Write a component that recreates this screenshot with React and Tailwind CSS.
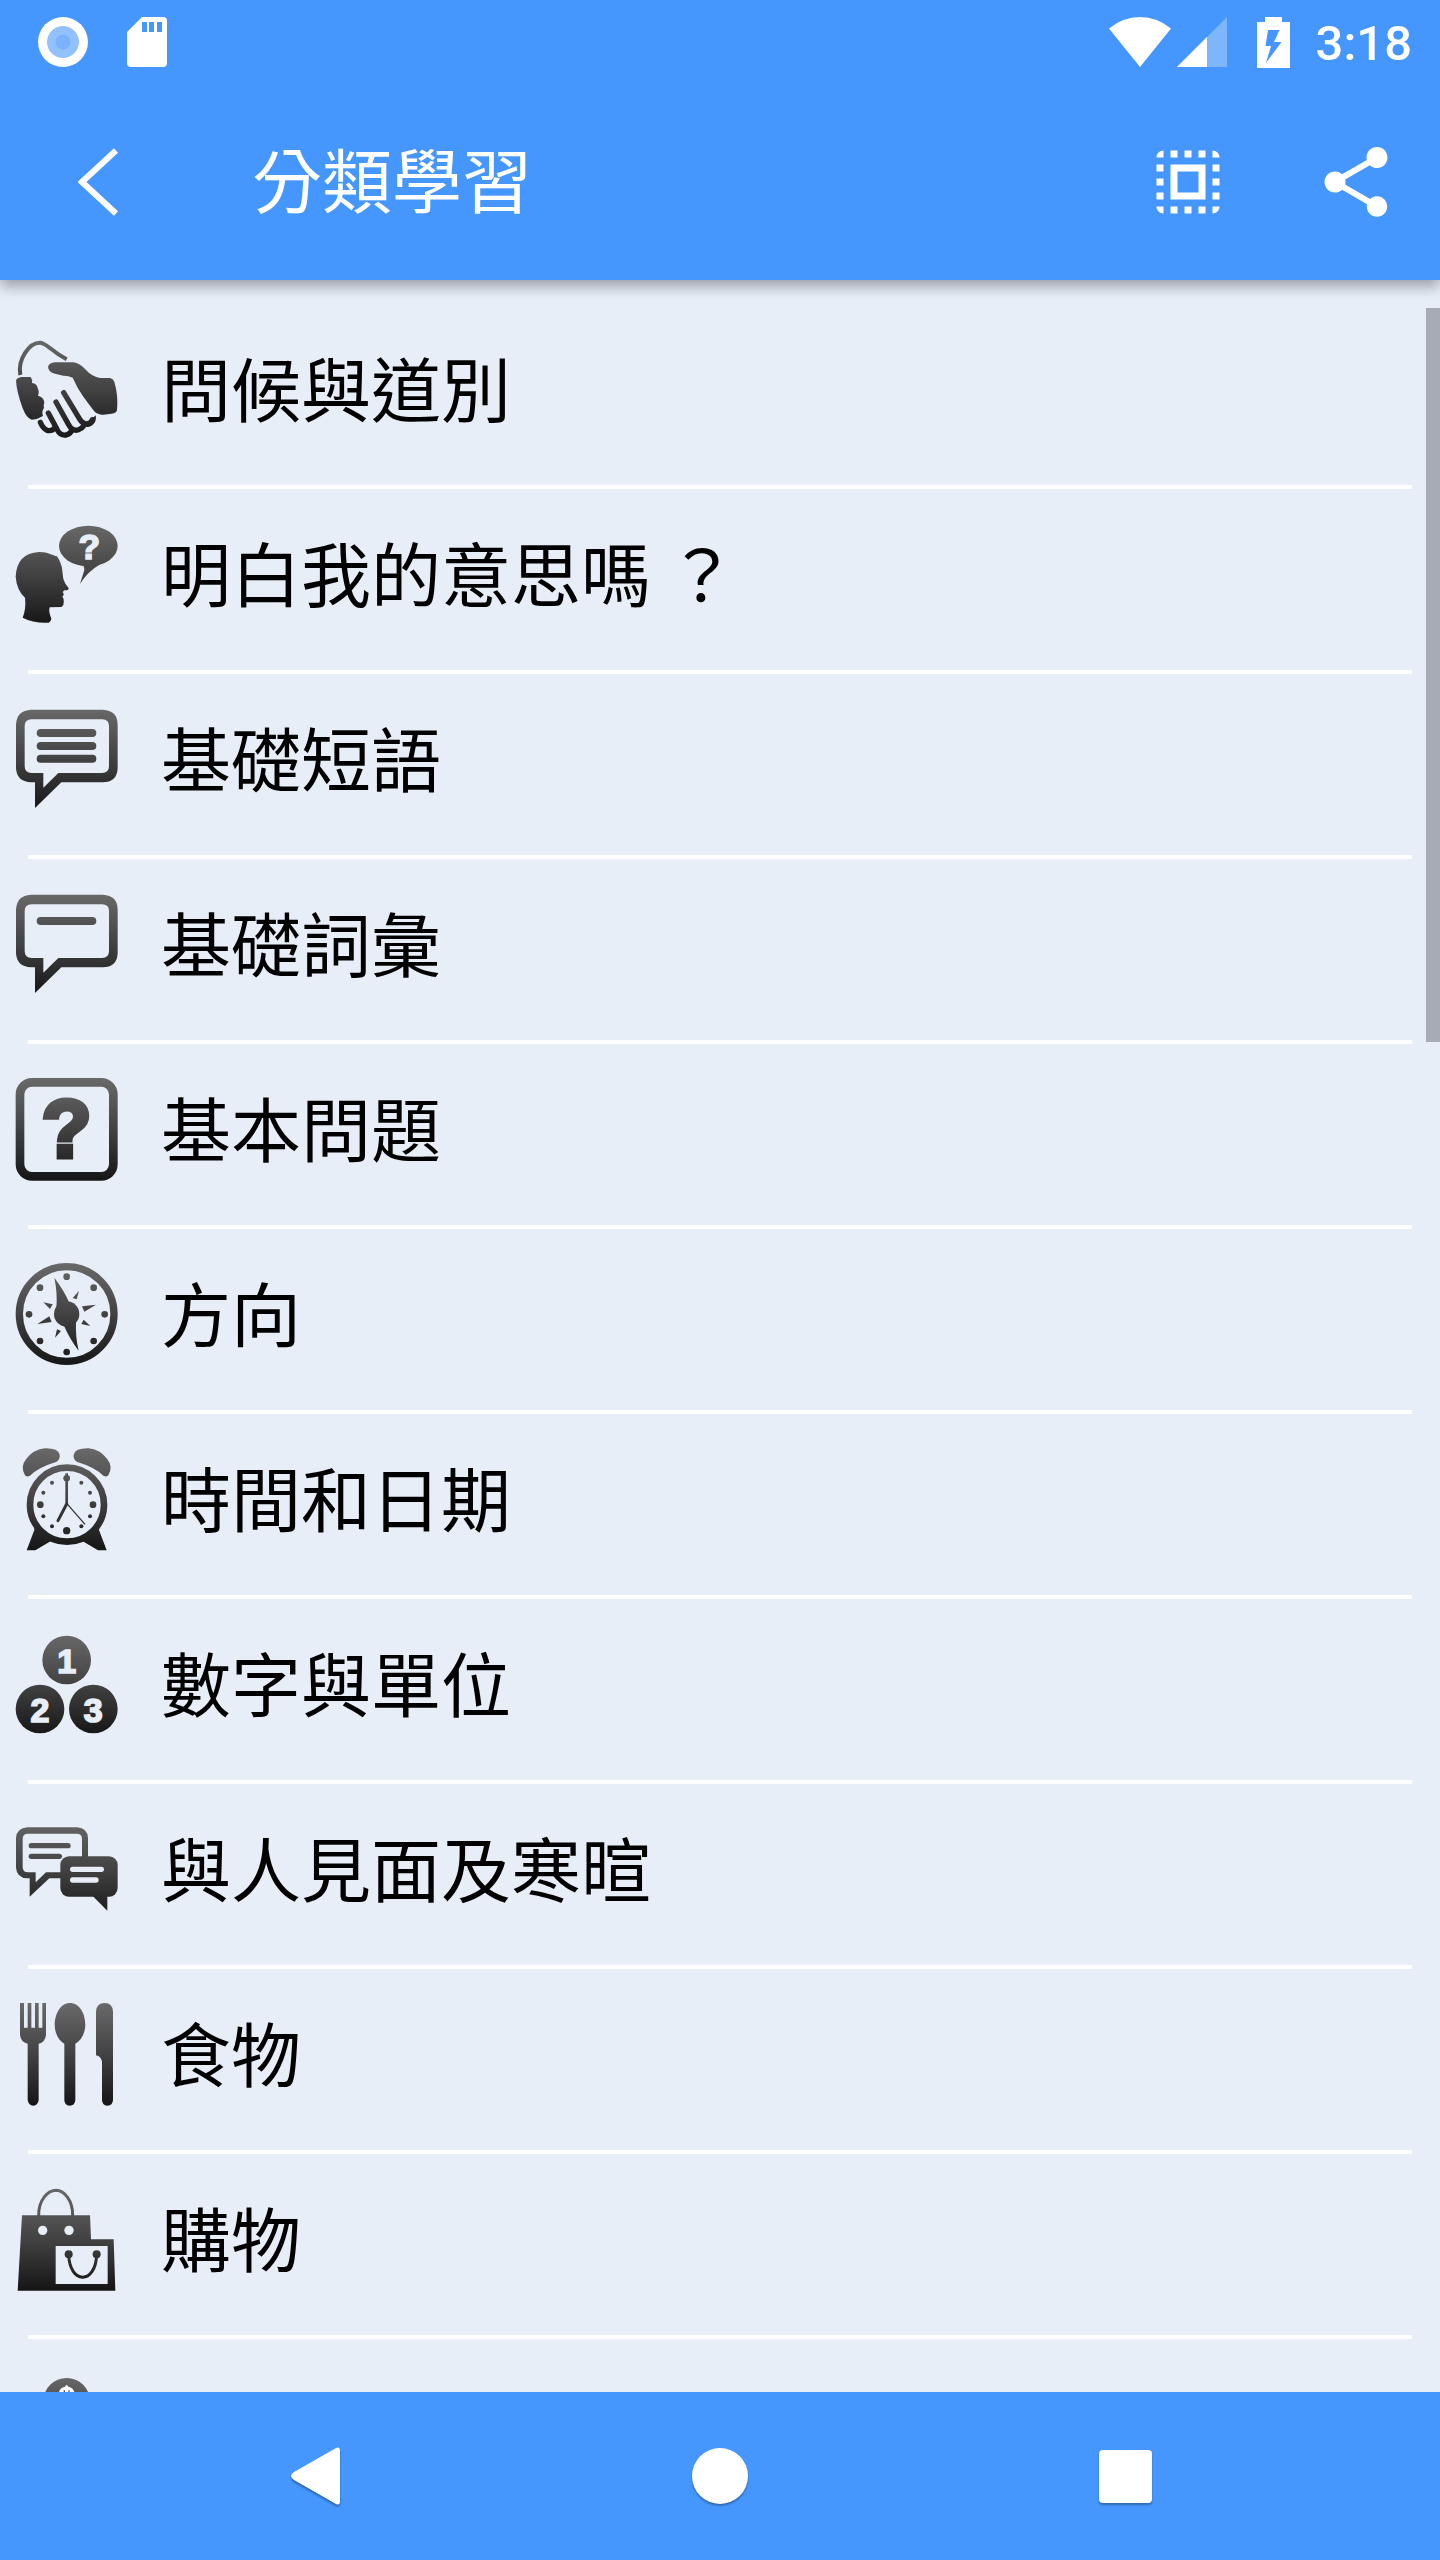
import { useId } from "react";

const BG = "#e7eef8";

/* Square list icon painted with the shared dark vertical gradient. */
function ListIcon({ top = 51, children }) {
  const id = useId();
  const paint = `url(#${id})`;
  return (
    <svg className="size-[104px] shrink-0" viewBox={`45 ${top} 312 312`} aria-hidden="true">
      <defs>
        <linearGradient id={id} gradientUnits="userSpaceOnUse" x1="0" x2="0" y1={top} y2={top + 312}>
          <stop offset="0" stopColor="#6a6a6a" />
          <stop offset="0.5" stopColor="#424242" />
          <stop offset="1" stopColor="#151515" />
        </linearGradient>
      </defs>
      {children(paint)}
    </svg>
  );
}

const Handshake = () => (
  <ListIcon>
    {(p) => (
      <>
        <path d="M61 165 C52 118 88 67 121 68 C141 70 150 91 200 118" fill="none" stroke={p} strokeWidth="12" />
        <path d="M48 182 Q50 173 65 171 L92 171 Q99 180 96 189 Q112 191 113 205 Q119 215 114 227 Q132 231 133 248 Q129 256 132 264 Q124 273 129 288 Q112 299 95 299 Q80 296 68 265 Q50 215 48 182Z" fill={p} />
        <path d="M144 140 Q148 128 165 127 L220 127 Q240 130 255 147 Q277 171 300 174 L330 174 Q340 176 343 185 Q355 225 351 270 Q349 280 335 281 L310 284 Q290 286 278 268 L250 230 Q232 205 218 173 Q203 166 190 167 L165 161 Q145 156 144 140Z" fill={p} />
        <g fill="none" stroke={p} strokeWidth="16" strokeLinecap="round">
          <path d="M191 218 L240 299 Q249 314 263 311 Q275 307 277 299" />
          <path d="M168 246 L206 314 Q216 334 234 330 Q246 326 252 316" />
          <path d="M145 279 L171 328 Q181 348 199 345 Q212 341 216 330" />
          <path d="M121 307 Q129 326 141 331 Q156 334 164 324" />
        </g>
        <path d="M272 297 Q280 294 287 286 Q291 305 277 316 Q267 323 258 320Z" fill={p} />
      </>
    )}
  </ListIcon>
);

const ThinkingHead = () => (
  <ListIcon top={606}>
    {(p) => (
      <>
        <path d="M117 696 C148 696 157 707 171 709 Q185 730 187 752 L190 777 Q195 793 206 804 Q207 812 193 811 L188 816 Q195 825 187 829 L191 838 Q193 858 184 861 L149 862 Q145 875 154 896 Q153 905 146 908 Q100 910 68 893 Q79 865 75 833 Q50 810 47 770 Q50 700 117 696Z" fill={p} />
        <ellipse cx="265" cy="678" rx="88" ry="61" fill={p} />
        <path d="M248 734 Q256 745 251 757 L240 792 Q262 755 302 732Z" fill={p} />
        <text x="268" y="718" textAnchor="middle" fontFamily="Liberation Sans, Arial, sans-serif" fontWeight="700" fontSize="106" fill={BG} stroke={BG} strokeWidth="5">?</text>
      </>
    )}
  </ListIcon>
);

const bubble =
  "M93 59 H308 Q353 61 353 104 V235 Q351 277 308 277 H184 L105 354 V277 H93 Q50 275 48 235 V104 Q50 61 93 59Z M95 88 Q74 88 74 108 V228 Q74 249 95 249 H130 V293 L175 249 H306 Q327 249 327 228 V108 Q327 88 306 88Z";

const Bubble = ({ lines }) => (
  <ListIcon>
    {(p) => (
      <>
        <path d={bubble} fill={p} fillRule="evenodd" />
        {lines.map((y) => (
          <rect key={y} x="110" y={y} width="179" height="24" rx="12" fill={p} />
        ))}
      </>
    )}
  </ListIcon>
);

const QuestionBox = () => (
  <ListIcon>
    {(p) => (
      <>
        <rect x="60" y="67" width="280" height="282" rx="36" fill="none" stroke={p} strokeWidth="26" />
        <text x="200" y="291" textAnchor="middle" fontFamily="Liberation Sans, Arial, sans-serif" fontWeight="700" fontSize="244" fill={p} stroke={p} strokeWidth="15">?</text>
      </>
    )}
  </ListIcon>
);

const Compass = () => (
  <ListIcon top={606}>
    {(p) => (
      <>
        <circle cx="200" cy="762" r="142" fill="none" stroke={p} strokeWidth="22" />
        <g fill={p}>
          {[[200, 650], [281, 683], [314, 763], [281, 843], [200, 876], [120, 843], [87, 763], [120, 683]].map(([x, y]) => (
            <circle key={`${x}-${y}`} cx={x} cy={y} r="10" />
          ))}
          <circle cx="200" cy="762" r="38" />
          <path d="M163 653 Q194 694 207 727 L169 744 Q173 700 163 653Z" />
          <path d="M236 872 Q208 835 192 797 L228 785 Q226 830 236 872Z" />
          <path d="M237 692 L218 714 L230 718Z M288 734 L246 739 L253 755Z M271 798 L251 779 L244 792Z M165 833 L171 808 L183 813Z M112 792 L148 769 L155 786Z M130 727 L158 733 L150 747Z" />
        </g>
      </>
    )}
  </ListIcon>
);

const AlarmClock = () => (
  <ListIcon>
    {(p) => (
      <>
        {["", "translate(400 0) scale(-1 1)"].map((t) => (
          <g key={t} transform={t || undefined} fill={p}>
            <path d="M75 136 Q60 110 78 88 Q100 58 135 55 Q174 54 179 74 Q181 89 168 96 Q115 112 90 137 Q80 142 75 136Z" />
            <path d="M102 286 L103 300 L80 361 H106 L153 333 Z" />
            <circle cx="121" cy="224" r="10" />
            <circle cx="156" cy="158" r="6" />
            <circle cx="130" cy="188" r="6" />
            <circle cx="130" cy="259" r="6" />
            <circle cx="156" cy="289" r="6" />
          </g>
        ))}
        <circle cx="201" cy="224" r="111" fill="none" stroke={p} strokeWidth="20" />
        <circle cx="200" cy="145" r="10" fill={p} />
        <circle cx="200" cy="302" r="11" fill={p} />
        <path d="M196 130 L204 130 L204 224 L196 220Z" fill={p} />
        <path d="M200 222 L174 272 " stroke="#333" strokeWidth="9" strokeLinecap="round" />
        <path d="M200 220 L255 283" stroke="#333" strokeWidth="4" />
      </>
    )}
  </ListIcon>
);

const Numbers = () => (
  <ListIcon top={606}>
    {(p) => (
      <>
        <g fill={p}>
          <circle cx="200" cy="690" r="73" />
          <circle cx="120" cy="837" r="73" />
          <circle cx="280" cy="837" r="73" />
        </g>
        <g fill={BG} stroke={BG} strokeWidth="5" fontFamily="Liberation Sans, Arial, sans-serif" fontWeight="700" fontSize="102" textAnchor="middle">
          <text x="200" y="730">1</text>
          <text x="120" y="875">2</text>
          <text x="280" y="875">3</text>
        </g>
      </>
    )}
  </ListIcon>
);

const Chat = () => (
  <ListIcon>
    {(p) => (
      <>
        <path
          d="M82 82 H232 Q262 84 264 114 V235 H148 L89 290 V235 H82 Q50 233 48 203 V114 Q50 84 82 82Z M84 101 Q68 101 68 117 V201 Q68 217 84 217 H107 V247 L138 217 H246 V117 Q246 101 230 101Z"
          fill={p}
          fillRule="evenodd"
        />
        <rect x="86" y="129" width="126" height="16" rx="8" fill={p} />
        <rect x="86" y="161" width="100" height="16" rx="8" fill={p} />
        <rect x="181" y="169" width="172" height="121" rx="26" fill={p} />
        <path d="M278 288 L322 332 V286Z" fill={p} />
        <rect x="210" y="200" width="102" height="16" rx="8" fill={BG} />
        <rect x="210" y="232" width="86" height="16" rx="8" fill={BG} />
      </>
    )}
  </ListIcon>
);

const Cutlery = () => (
  <ListIcon top={606}>
    {(p) => (
      <g fill={p}>
        <path d="M60 609 H72 V683 H83 V609 H94 V683 H105 V609 H116 V683 H127 V609 H138 V705 Q135 728 116 731 V900 Q114 916 100 917 Q85 916 83 900 V731 Q62 726 60 705Z" />
        <path d="M210 609 C238 609 256 640 256 674 C255 703 242 722 226 731 V900 Q225 917 209 917 Q193 916 193 900 V731 C177 722 165 703 164 674 C165 640 182 609 210 609Z" />
        <path d="M288 635 Q289 609 314 609 Q338 609 339 635 V900 Q338 917 322 917 Q306 916 306 900 V786 Q304 769 288 766Z" />
      </g>
    )}
  </ListIcon>
);

const Bags = () => (
  <ListIcon>
    {(p) => (
      <>
        <path d="M116 138 C115 88 145 61 168 61 C193 62 219 90 218 138" fill="none" stroke={p} strokeWidth="9" />
        <path d="M66 136 H270 L273 208 H341 L346 362 H53Z" fill={p} />
        <circle cx="128" cy="181" r="14" fill={BG} />
        <circle cx="207" cy="181" r="14" fill={BG} />
        <path d="M167 228 H323 V342 H167Z" fill={BG} />
        <circle cx="206" cy="253" r="12" fill={p} />
        <circle cx="290" cy="253" r="12" fill={p} />
        <path d="M206 253 C208 343 287 346 290 253" fill="none" stroke={p} strokeWidth="9" />
      </>
    )}
  </ListIcon>
);

const Coin = () => (
  <ListIcon top={606}>
    {(p) => (
      <>
        <circle cx="200" cy="694" r="70" fill={p} />
        <path d="M195 650 Q200 640 205 650 Q224 654 224 674 H176 Q176 654 195 650Z" fill="#fff" />
        <path d="M191 661 h4 v8 h-4z M205 661 h4 v8 h-4z" fill="#5d5d5d" />
      </>
    )}
  </ListIcon>
);

const rows = [
  { label: "問候與道別", icon: <Handshake /> },
  { label: "明白我的意思嗎 ？", icon: <ThinkingHead /> },
  { label: "基礎短語", icon: <Bubble lines={[117, 156, 194]} /> },
  { label: "基礎詞彙", icon: <Bubble lines={[126]} /> },
  { label: "基本問題", icon: <QuestionBox /> },
  { label: "方向", icon: <Compass /> },
  { label: "時間和日期", icon: <AlarmClock /> },
  { label: "數字與單位", icon: <Numbers /> },
  { label: "與人見面及寒暄", icon: <Chat /> },
  { label: "食物", icon: <Cutlery /> },
  { label: "購物", icon: <Bags /> },
  { label: "", icon: <Coin /> },
];

function StatusBar() {
  return (
    <div className="flex h-[84px] items-center justify-between pr-7 pl-[38px]">
      <div className="flex items-center gap-[39px]">
        <svg className="size-[50px]" viewBox="0 0 50 50" aria-hidden="true">
          <circle cx="25" cy="25" r="25" fill="#fff" />
          <circle cx="25" cy="25" r="16" fill="#93c1fe" />
          <circle cx="25" cy="25" r="7.5" fill="#7cb2fc" />
        </svg>
        <svg className="h-[50px] w-10" viewBox="0 0 40 50" aria-hidden="true">
          <path fillRule="evenodd" fill="#fff" d="M15 0 H36 Q40 0 40 4 V46 Q40 50 36 50 H4 Q0 50 0 46 V15Z M15 5 V15 H20 V5Z M22 5 V15 H27 V5Z M30 5 V15 H35 V5Z" />
        </svg>
      </div>
      <div className="flex items-center text-white">
        <svg className="h-[50px] w-[62px]" viewBox="0 0 62 50" aria-hidden="true">
          <path fill="#fff" d="M0 11.5 Q14 0 31 0 Q48 0 62 11.5 L31 50Z" />
        </svg>
        <svg className="ml-1.5 size-[50px]" viewBox="0 0 50 50" aria-hidden="true">
          <path fill="#fff" fillOpacity="0.3" d="M50 0 V50 H0Z" />
          <path fill="#fff" d="M30 20 V50 H0Z" />
        </svg>
        <svg className="ml-[30px] h-[51px] w-[33px]" viewBox="0 0 33 51" aria-hidden="true">
          <path fillRule="evenodd" fill="#fff" d="M8 0 H25 V5 H33 V51 H0 V5 H8Z M11 13 L8.500 29 H14 L9 46 L24.500 25 H17 L22.500 13Z" />
        </svg>
        <span className="ml-[26px] pt-1 font-['Roboto',sans-serif] text-[49px] leading-[56px] font-medium">3:18</span>
      </div>
    </div>
  );
}

export default function App() {
  return (
    <div lang="zh-Hant" className="flex h-screen flex-col bg-[#e7eef8] font-['Noto_Sans_CJK_TC',sans-serif]">
      <header className="relative z-10 bg-[#4597fd] text-white shadow-[0_6px_14px_rgba(0,0,0,0.35)]">
        <StatusBar />
        <div className="flex h-[196px] items-center pr-[42px]">
          <button type="button" aria-label="Back" className="flex h-[196px] w-[196px] shrink-0 items-center justify-center">
            <svg className="h-[68px] w-[41px]" viewBox="0 0 41 68" aria-hidden="true">
              <path d="M38 2.500 L4 34 L38 65.500" fill="none" stroke="#fff" strokeWidth="6" />
            </svg>
          </button>
          <h1 className="ml-14 grow pb-2 text-[70px] leading-[84px] font-normal">分類學習</h1>
          <button type="button" aria-label="Select all" className="mr-[84px] size-[84px]">
            <svg viewBox="0 0 24 24" fill="#fff" aria-hidden="true">
              <path d="M3 5h2V3c-1.100 0-2 .9-2 2zm0 8h2v-2H3v2zm4 8h2v-2H7v2zM3 9h2V7H3v2zm10-6h-2v2h2V3zm6 0v2h2c0-1.100-.9-2-2-2zM5 21v-2H3c0 1.100.9 2 2 2zm-2-4h2v-2H3v2zM9 3H7v2h2V3zm2 18h2v-2h-2v2zm8-8h2v-2h-2v2zm0 8c1.100 0 2-.9 2-2h-2v2zm0-12h2V7h-2v2zm0 8h2v-2h-2v2zm-4 4h2v-2h-2v2zm0-16h2V3h-2v2zM7 17h10V7H7v10zm2-8h6v6H9V9z" />
            </svg>
          </button>
          <button type="button" aria-label="Share" className="size-[84px]">
            <svg viewBox="0 0 24 24" fill="#fff" aria-hidden="true">
              <path d="M18 16.080c-.76 0-1.440.3-1.960.77L8.910 12.700c.05-.23.090-.46.090-.7s-.04-.47-.09-.7l7.050-4.110c.54.5 1.250.81 2.040.81 1.660 0 3-1.340 3-3s-1.340-3-3-3-3 1.340-3 3c0 .24.040.47.090.7L8.040 9.810C7.500 9.310 6.790 9 6 9c-1.660 0-3 1.340-3 3s1.340 3 3 3c.79 0 1.500-.31 2.040-.81l7.120 4.160c-.05.21-.08.43-.08.65 0 1.610 1.310 2.920 2.920 2.920 1.610 0 2.920-1.310 2.920-2.920s-1.310-2.920-2.920-2.920z" />
            </svg>
          </button>
        </div>
      </header>

      <main className="relative min-h-0 flex-1 overflow-hidden">
        <ul className="pt-6">
          {rows.map(({ label, icon }) => (
            <li key={label}>
              <button type="button" className="flex h-[181px] w-full items-center gap-[42px] pb-3 pl-[15px] text-left">
                {icon}
                <span className="pb-1 text-[70px] leading-[84px] text-black">{label}</span>
              </button>
              <div className="mx-7 h-1 bg-white" />
            </li>
          ))}
        </ul>
        <div className="absolute top-7 right-0 h-[734px] w-3.5 bg-[#a7abb3]" />
      </main>

      <nav className="grid h-[168px] shrink-0 grid-cols-3 bg-[#4597fd] px-28">
        <button type="button" aria-label="Back" className="flex items-center justify-center">
          <svg className="size-[60px] drop-shadow-[0_2px_1px_rgba(0,0,0,0.35)]" viewBox="0 0 60 60" aria-hidden="true">
            <path d="M51 2 Q55 0 55 5 V55 Q55 60 51 58 L9 34 Q3 30 9 26Z" fill="#fff" />
          </svg>
        </button>
        <button type="button" aria-label="Home" className="flex items-center justify-center">
          <span className="size-14 rounded-full bg-white shadow-[0_2px_2px_rgba(0,0,0,0.3)]" />
        </button>
        <button type="button" aria-label="Recent apps" className="flex items-center justify-center">
          <span className="size-[53px] rounded bg-white shadow-[0_2px_2px_rgba(0,0,0,0.3)]" />
        </button>
      </nav>
    </div>
  );
}
